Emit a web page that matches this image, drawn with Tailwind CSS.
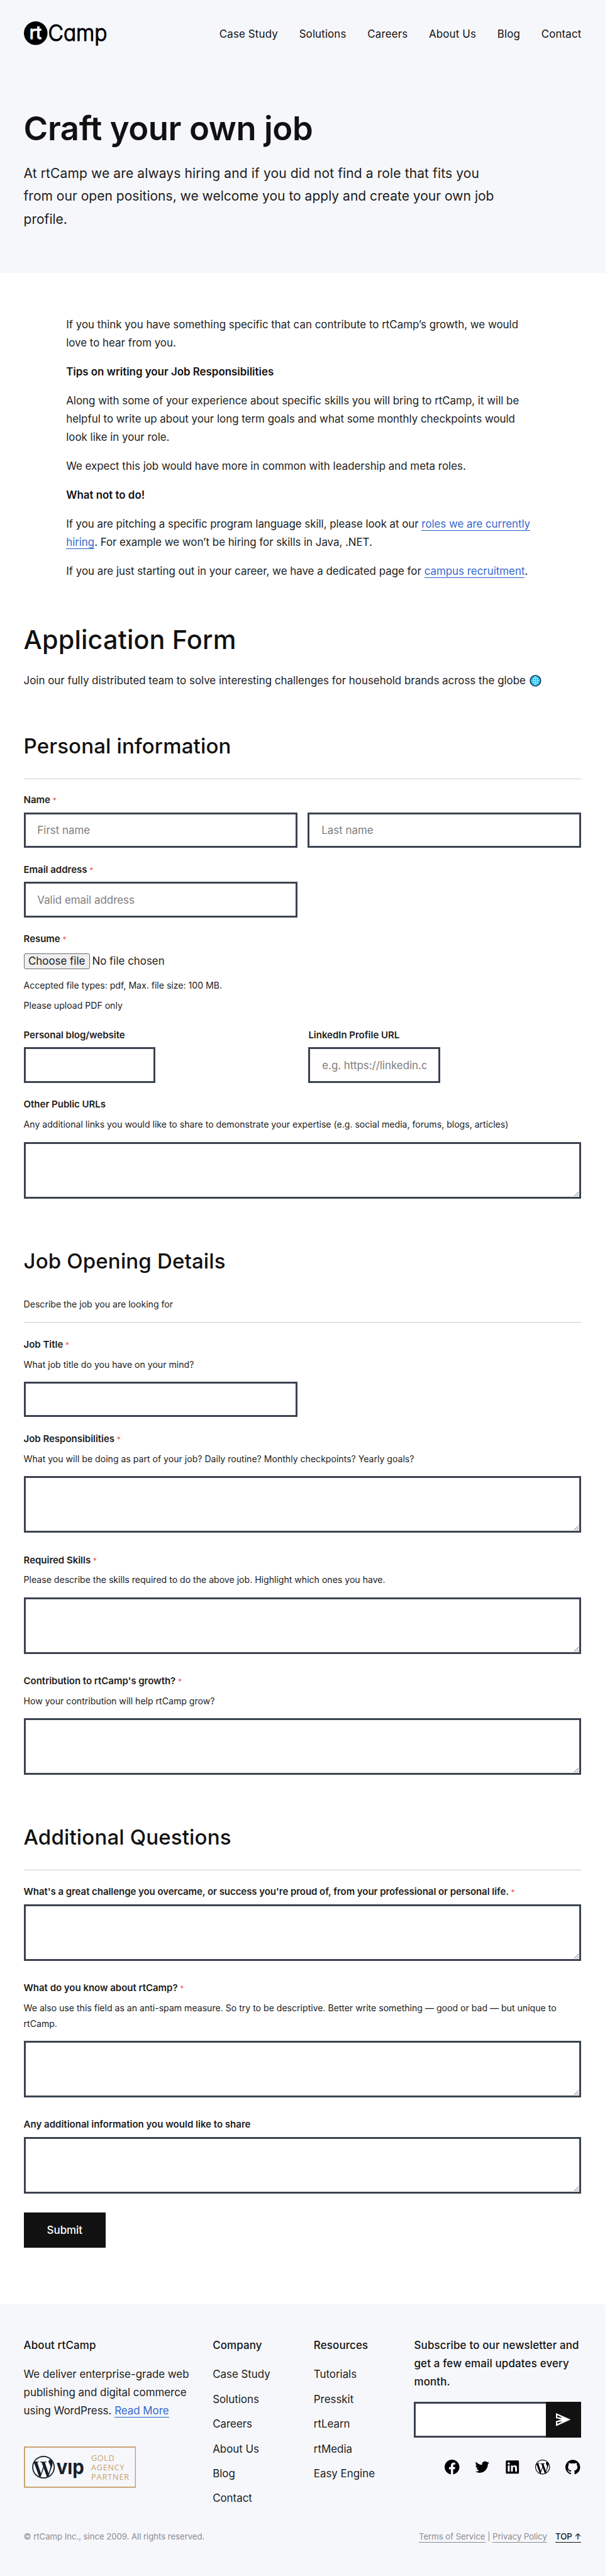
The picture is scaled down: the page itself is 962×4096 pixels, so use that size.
<!DOCTYPE html>
<html lang="en" class="text-[15.03px]">
<head>
<meta charset="utf-8">
<title>Craft your own job - rtCamp</title>
<script src="https://cdn.jsdelivr.net/npm/@tailwindcss/browser@4"></script>
</head>
<body class="h-[4096px] overflow-hidden flex flex-col bg-white font-['Inter',sans-serif] text-lg leading-7.75 font-normal text-[#1c1c1c]">

<div class="h-115.5 shrink-0 bg-[#f6f7fb] px-10">
  <header class="flex h-29 items-center justify-between">
    <svg class="h-11 w-35 shrink-0 overflow-visible" viewBox="0 0 140 44" role="img" aria-label="rtCamp">
      <circle cx="20" cy="20" r="20"/>
      <text x="9.500" y="30" textLength="20.500" lengthAdjust="spacingAndGlyphs" class="fill-white stroke-white stroke-1 font-['Inter',sans-serif] text-[30px] font-medium [stroke-linejoin:round]">rt</text>
      <text x="41" y="33.500" textLength="100" lengthAdjust="spacingAndGlyphs" class="fill-black stroke-black stroke-[1.3] font-['Inter',sans-serif] text-[38px] font-light [stroke-linejoin:round] [font-feature-settings:'cv11']">Camp</text>
    </svg>
    <nav class="flex gap-9 tracking-[0.008em] text-[#111]">
      <a>Case Study</a><a>Solutions</a><a>Careers</a><a>About Us</a><a>Blog</a><a>Contact</a>
    </nav>
  </header>
  <h1 class="mt-17 text-[3.5rem] leading-16.75 font-semibold tracking-[-0.008em] text-[#111]">Craft your own job</h1>
  <p class="mt-[1.45rem] w-202 text-[1.4rem] leading-9.75"><span class="tracking-[0.005em]">At rtCamp we are always hiring and if you did not find a role that fits you</span><br>from our open positions, we welcome you to apply and create your own job<br>profile.</p>
</div>

<main class="px-10">
  <article class="mx-18 flex flex-col gap-4.5 pt-18">
    <p>If you think you have something specific that can contribute to rtCamp’s growth, we would<br>love to hear from you.</p>
    <p class="font-semibold text-[#111]">Tips on writing your Job Responsibilities</p>
    <p>Along with some of your experience about specific skills you will bring to rtCamp, it will be<br>helpful to write up about your long term goals and what some monthly checkpoints would<br>look like in your role.</p>
    <p>We expect this job would have more in common with leadership and meta roles.</p>
    <p class="font-semibold text-[#111]">What not to do!</p>
    <p class="tracking-[-0.002em]">If you are pitching a specific program language skill, please look at our <a class="border-b border-[#1e63c8] text-[#3568cf]">roles we are currently</a><br><a class="border-b border-[#1e63c8] text-[#3568cf]">hiring</a>. For example we won’t be hiring for skills in Java, .NET.</p>
    <p>If you are just starting out in your career, we have a dedicated page for <a class="border-b border-[#1e63c8] text-[#3568cf]">campus recruitment</a>.</p>
  </article>

  <h2 class="mt-18.25 text-[2.75rem] leading-13.5 font-medium tracking-[0.004em] text-[#111]">Application Form</h2>
  <p class="mt-6.75 flex items-center gap-1.75">Join our fully distributed team to solve interesting challenges for household brands across the globe
    <svg class="size-5 shrink-0" viewBox="0 0 20 20"><circle cx="10" cy="10" r="9" fill="#14b4ec" stroke="#12222e" stroke-width="1.4"/><g fill="none" stroke="#e8faff" stroke-width="0.8"><ellipse cx="10" cy="10" rx="3.4" ry="7"/><path d="M10 3v14M3 10h14M4.500 6.500h11M4.500 13.500h11"/></g></svg>
  </p>

  <form class="text-base">
    <section>
      <h3 class="mt-18.25 border-b border-[#ccc] pb-8.5 text-[2.2rem] leading-10.75 font-medium tracking-[0.004em] text-[#111]">Personal information</h3>
      <label class="mt-5.25 block leading-6.75 font-semibold tracking-[-0.002em]">Name <span class="text-[0.8rem] leading-none font-normal text-[#f0524f]">*</span></label>
      <div class="mt-2 flex gap-4.5">
        <input class="h-15 min-w-0 flex-1 border-3 border-[#3b4350] px-5 text-lg placeholder:text-[#7d7d7d]" placeholder="First name">
        <input class="h-15 min-w-0 flex-1 border-3 border-[#3b4350] px-5 text-lg placeholder:text-[#7d7d7d]" placeholder="Last name">
      </div>
      <label class="mt-5.75 block leading-6.75 font-semibold tracking-[-0.002em]">Email address <span class="text-[0.8rem] leading-none font-normal text-[#f0524f]">*</span></label>
      <input class="mt-2 block h-15 w-116 border-3 border-[#3b4350] px-5 text-lg placeholder:text-[#7d7d7d]" placeholder="Valid email address">
      <label class="mt-5.75 block leading-6.75 font-semibold tracking-[-0.002em]">Resume <span class="text-[0.8rem] leading-none font-normal text-[#f0524f]">*</span></label>
      <div class="mt-2.75 flex h-6.5 items-center gap-1 text-lg">
        <button type="button" class="flex h-6.5 w-28 items-center justify-center rounded-[3px] border border-[#6b6b6b] bg-[#efefef] whitespace-nowrap">Choose file</button>
        <span>No file chosen</span>
      </div>
      <p class="mt-3.75 text-[0.9375rem] leading-6.5">Accepted file types: pdf, Max. file size: 100 MB.</p>
      <p class="mt-2 text-[0.9375rem] leading-6.5">Please upload PDF only</p>
      <div class="mt-5.75 grid grid-cols-2 gap-5">
        <div>
          <label class="block leading-6.75 font-semibold tracking-[-0.002em]">Personal blog/website</label>
          <input class="mt-2 block h-15 w-55.75 border-3 border-[#3b4350] px-5 text-lg">
        </div>
        <div>
          <label class="block leading-6.75 font-semibold tracking-[-0.002em]">LinkedIn Profile URL</label>
          <input class="mt-2 block h-15 w-55.75 border-3 border-[#3b4350] px-5 text-lg placeholder:text-[#7d7d7d]" placeholder="e.g. https://linkedin.com/in/">
        </div>
      </div>
      <label class="mt-5.75 block leading-6.75 font-semibold tracking-[-0.002em]">Other Public URLs</label>
      <p class="mt-2 text-[0.9375rem] leading-6.5">Any additional links you would like to share to demonstrate your expertise (e.g. social media, forums, blogs, articles)</p>
      <textarea class="mt-4 block h-24 w-full border-3 border-[#3b4350]"></textarea>
    </section>

    <section>
      <h3 class="mt-21 text-[2.2rem] leading-10.75 font-medium tracking-[0.004em] text-[#111]">Job Opening Details</h3>
      <p class="mt-9.75 border-b border-[#ccc] pb-4.25 text-[0.9375rem] leading-6.5">Describe the job you are looking for</p>
      <label class="mt-5.75 block leading-6.75 font-semibold tracking-[-0.002em]">Job Title <span class="text-[0.8rem] leading-none font-normal text-[#f0524f]">*</span></label>
      <p class="mt-2 text-[0.9375rem] leading-6.5">What job title do you have on your mind?</p>
      <input class="mt-4 block h-15 w-116 border-3 border-[#3b4350] px-5 text-lg">
      <label class="mt-5.75 block leading-6.75 font-semibold tracking-[-0.002em]">Job Responsibilities <span class="text-[0.8rem] leading-none font-normal text-[#f0524f]">*</span></label>
      <p class="mt-2 text-[0.9375rem] leading-6.5">What you will be doing as part of your job? Daily routine? Monthly checkpoints? Yearly goals?</p>
      <textarea class="mt-4 block h-24 w-full border-3 border-[#3b4350]"></textarea>
      <label class="mt-8 block leading-6.75 font-semibold tracking-[-0.002em]">Required Skills <span class="text-[0.8rem] leading-none font-normal text-[#f0524f]">*</span></label>
      <p class="mt-2 text-[0.9375rem] leading-6.5">Please describe the skills required to do the above job. Highlight which ones you have.</p>
      <textarea class="mt-4 block h-24 w-full border-3 border-[#3b4350]"></textarea>
      <label class="mt-8 block leading-6.75 font-semibold tracking-[-0.002em]">Contribution to rtCamp's growth? <span class="text-[0.8rem] leading-none font-normal text-[#f0524f]">*</span></label>
      <p class="mt-2 text-[0.9375rem] leading-6.5">How your contribution will help rtCamp grow?</p>
      <textarea class="mt-4 block h-24 w-full border-3 border-[#3b4350]"></textarea>
    </section>

    <section>
      <h3 class="mt-21 border-b border-[#ccc] pb-8.25 text-[2.2rem] leading-10.75 font-medium tracking-[0.004em] text-[#111]">Additional Questions</h3>
      <label class="mt-5.75 block leading-6.75 font-semibold tracking-[-0.004em]">What's a great challenge you overcame, or success you're proud of, from your professional or personal life. <span class="text-[0.8rem] leading-none font-normal text-[#f0524f]">*</span></label>
      <textarea class="mt-2 block h-24 w-full border-3 border-[#3b4350]"></textarea>
      <label class="mt-8 block leading-6.75 font-semibold tracking-[-0.002em]">What do you know about rtCamp? <span class="text-[0.8rem] leading-none font-normal text-[#f0524f]">*</span></label>
      <p class="mt-2 text-[0.9375rem] leading-6.5">We also use this field as an anti-spam measure. So try to be descriptive. Better write something — good or bad — but unique to<br>rtCamp.</p>
      <textarea class="mt-4 block h-24 w-full border-3 border-[#3b4350]"></textarea>
      <label class="mt-8 block leading-6.75 font-semibold">Any additional information you would like to share</label>
      <textarea class="mt-2 block h-24 w-full border-3 border-[#3b4350]"></textarea>
    </section>
    <button type="button" class="mt-7.75 block h-15 w-34.75 bg-[#111] text-lg font-medium text-white">Submit</button>
  </form>
</main>

<footer class="mt-24 flex-1 bg-[#f6f7fb] px-10 pt-[3.4rem]">
  <div class="flex">
    <div class="w-80">
      <h4 class="font-medium tracking-[0.01em] text-[#111]">About rtCamp</h4>
      <p class="mt-4.5">We deliver enterprise-grade web<br>publishing and digital commerce<br>using WordPress. <a class="border-b border-[#1e63c8] text-[#3568cf]">Read More</a></p>
      <svg class="mt-11 h-17.5 w-47.5" viewBox="0 0 190 70" role="img" aria-label="WordPress VIP Gold Agency Partner">
        <rect x="1" y="1" width="188" height="68" fill="none" stroke="#c6a06b" stroke-width="2"/>
        <g transform="translate(14 16) scale(1.6)" fill="#14212b"><path d="M21.469 6.825c.84 1.537 1.318 3.3 1.318 5.175 0 3.979-2.156 7.456-5.363 9.325l3.295-9.527c.615-1.54.82-2.771.82-3.864 0-.405-.026-.78-.07-1.11m-7.981.105c.647-.03 1.232-.105 1.232-.105.582-.075.514-.93-.067-.899 0 0-1.755.135-2.88.135-1.064 0-2.85-.15-2.85-.15-.585-.03-.661.855-.075.885 0 0 .54.061 1.125.09l1.68 4.605-2.37 7.08L5.354 6.9c.649-.03 1.234-.1 1.234-.1.585-.075.516-.93-.065-.896 0 0-1.746.138-2.874.138-.2 0-.438-.008-.69-.015C4.911 3.15 8.235 1.215 12 1.215c2.809 0 5.365 1.072 7.286 2.833-.046-.003-.091-.009-.141-.009-1.06 0-1.812.923-1.812 1.914 0 .89.513 1.643 1.06 2.531.411.72.89 1.643.89 2.977 0 .915-.354 1.994-.821 3.479l-1.075 3.585-3.9-11.61.001.014zM12 22.784c-1.059 0-2.081-.153-3.048-.437l3.237-9.406 3.315 9.087c.024.053.05.101.078.149-1.12.393-2.325.609-3.582.609M1.211 12c0-1.564.336-3.05.935-4.39L7.29 21.709C3.694 19.96 1.212 16.271 1.211 12M12 0C5.385 0 0 5.385 0 12s5.385 12 12 12 12-5.385 12-12S18.615 0 12 0"/></g>
        <text x="55" y="46.500" textLength="47" lengthAdjust="spacingAndGlyphs" fill="#14212b" class="font-['Inter',sans-serif] text-[34px] font-bold">vıp</text>
        <g fill="#c6a06b" class="font-['Open_Sans',sans-serif] text-[13.5px] font-normal"><text x="114" y="25" textLength="39">GOLD</text><text x="114" y="40.500" textLength="56">AGENCY</text><text x="114" y="56" textLength="64">PARTNER</text></g>
      </svg>
    </div>
    <div class="w-42.75">
      <h4 class="font-medium tracking-[0.01em] text-[#111]">Company</h4>
      <div class="mt-4.5 flex flex-col gap-2.75"><a>Case Study</a><a>Solutions</a><a>Careers</a><a>About Us</a><a>Blog</a><a>Contact</a></div>
    </div>
    <div class="w-42.5">
      <h4 class="font-medium tracking-[0.01em] text-[#111]">Resources</h4>
      <div class="mt-4.5 flex flex-col gap-2.75"><a>Tutorials</a><a>Presskit</a><a>rtLearn</a><a>rtMedia</a><a>Easy Engine</a></div>
    </div>
    <div class="min-w-0 flex-1">
      <h4 class="font-medium tracking-[0.01em] whitespace-nowrap text-[#111]">Subscribe to our newsletter and<br>get a few email updates every<br>month.</h4>
      <div class="mt-4.5 flex">
        <input class="h-15 w-55.75 border-3 border-r-0 border-[#3b4350] bg-white px-5">
        <button type="button" class="flex h-15 flex-1 items-center justify-center bg-[#111]"><svg class="h-5.5 w-6.25" viewBox="0 0 25 22"><path fill="#fff" fill-rule="evenodd" d="M0 0 25 11 0 22v-8.500L9.500 11 0 8.500zM2.200 3.500v3.400l9.200 1.100zM2.200 18.500v-3.400l9.200-1.100z"/></svg></button>
      </div>
      <div class="mt-9.5 flex items-center justify-end gap-6.5 pr-0.5">
        <svg class="size-6.25" viewBox="0 0 24 24"><path d="M24 12.073c0-6.627-5.373-12-12-12s-12 5.373-12 12c0 5.99 4.388 10.954 10.125 11.854v-8.385H7.078v-3.47h3.047V9.43c0-3.007 1.792-4.669 4.533-4.669 1.312 0 2.686.235 2.686.235v2.953H15.83c-1.491 0-1.956.925-1.956 1.874v2.25h3.328l-.532 3.47h-2.796v8.385C19.612 23.027 24 18.062 24 12.073z"/></svg>
        <svg class="size-6.25" viewBox="-0.500 -0.500 25 25"><path d="M23.953 4.570a10 10 0 01-2.825.775 4.958 4.958 0 002.163-2.723c-.951.555-2.005.959-3.127 1.184a4.920 4.920 0 00-8.384 4.482C7.690 8.095 4.067 6.130 1.640 3.162a4.822 4.822 0 00-.666 2.475c0 1.710.870 3.213 2.188 4.096a4.904 4.904 0 01-2.228-.616v.060a4.923 4.923 0 003.946 4.827 4.996 4.996 0 01-2.212.085 4.936 4.936 0 004.604 3.417 9.867 9.867 0 01-6.102 2.105c-.390 0-.779-.023-1.170-.067a13.995 13.995 0 007.557 2.209c9.053 0 13.998-7.496 13.998-13.985 0-.210 0-.420-.015-.630A9.935 9.935 0 0024 4.590z"/></svg>
        <svg class="size-6.25" viewBox="-1.500 -1.500 27 27"><path d="M20.447 20.452h-3.554v-5.569c0-1.328-.027-3.037-1.852-3.037-1.853 0-2.136 1.445-2.136 2.939v5.667H9.351V9h3.414v1.561h.046c.477-.9 1.637-1.850 3.370-1.850 3.601 0 4.267 2.370 4.267 5.455v6.286zM5.337 7.433c-1.144 0-2.063-.926-2.063-2.065 0-1.138.920-2.063 2.063-2.063 1.140 0 2.064.925 2.064 2.063 0 1.139-.925 2.065-2.064 2.065zm1.782 13.019H3.555V9h3.564v11.452zM22.225 0H1.771C.792 0 0 .774 0 1.729v20.542C0 23.227.792 24 1.771 24h20.451C23.200 24 24 23.227 24 22.271V1.729C24 .774 23.200 0 22.222 0h.003z"/></svg>
        <svg class="size-6.25" viewBox="0 0 24 24"><path d="M21.469 6.825c.84 1.537 1.318 3.3 1.318 5.175 0 3.979-2.156 7.456-5.363 9.325l3.295-9.527c.615-1.54.82-2.771.82-3.864 0-.405-.026-.78-.07-1.11m-7.981.105c.647-.03 1.232-.105 1.232-.105.582-.075.514-.93-.067-.899 0 0-1.755.135-2.88.135-1.064 0-2.85-.15-2.85-.15-.585-.03-.661.855-.075.885 0 0 .54.061 1.125.09l1.68 4.605-2.37 7.08L5.354 6.9c.649-.03 1.234-.1 1.234-.1.585-.075.516-.93-.065-.896 0 0-1.746.138-2.874.138-.2 0-.438-.008-.69-.015C4.911 3.15 8.235 1.215 12 1.215c2.809 0 5.365 1.072 7.286 2.833-.046-.003-.091-.009-.141-.009-1.06 0-1.812.923-1.812 1.914 0 .89.513 1.643 1.06 2.531.411.72.89 1.643.89 2.977 0 .915-.354 1.994-.821 3.479l-1.075 3.585-3.9-11.61.001.014zM12 22.784c-1.059 0-2.081-.153-3.048-.437l3.237-9.406 3.315 9.087c.024.053.05.101.078.149-1.12.393-2.325.609-3.582.609M1.211 12c0-1.564.336-3.05.935-4.39L7.29 21.709C3.694 19.96 1.212 16.271 1.211 12M12 0C5.385 0 0 5.385 0 12s5.385 12 12 12 12-5.385 12-12S18.615 0 12 0"/></svg>
        <svg class="size-6.25" viewBox="0 0 24 24"><path d="M12 .297c-6.63 0-12 5.373-12 12 0 5.303 3.438 9.8 8.205 11.385.6.113.82-.258.82-.577 0-.285-.01-1.04-.015-2.04-3.338.724-4.042-1.61-4.042-1.61C4.422 18.07 3.633 17.7 3.633 17.7c-1.087-.744.084-.729.084-.729 1.205.084 1.838 1.236 1.838 1.236 1.07 1.835 2.809 1.305 3.495.998.108-.776.417-1.305.76-1.605-2.665-.3-5.466-1.332-5.466-5.93 0-1.31.465-2.38 1.235-3.22-.135-.303-.54-1.523.105-3.176 0 0 1.005-.322 3.3 1.23.96-.267 1.98-.399 3-.405 1.02.006 2.04.138 3 .405 2.28-1.552 3.285-1.23 3.285-1.23.645 1.653.24 2.873.12 3.176.765.84 1.23 1.91 1.23 3.22 0 4.61-2.805 5.625-5.475 5.92.42.36.81 1.096.81 2.22 0 1.606-.015 2.896-.015 3.286 0 .315.21.69.825.57C20.565 22.092 24 17.592 24 12.297c0-6.627-5.373-12-12-12"/></svg>
      </div>
    </div>
  </div>
  <div class="mt-9.25 flex justify-between text-[0.875rem] leading-6 tracking-[-0.002em] text-[#8b8b8f]">
    <p>© rtCamp Inc., since 2009. All rights reserved.</p>
    <p class="flex items-center leading-[1.3]"><a class="border-b border-[#8b8b8f]">Terms of Service</a><span class="px-1">|</span><a class="border-b border-[#8b8b8f]">Privacy Policy</a><a class="ml-3.5 border-b border-[#111] font-medium text-[#111]">TOP ↑</a></p>
  </div>
</footer>
</body>
</html>
